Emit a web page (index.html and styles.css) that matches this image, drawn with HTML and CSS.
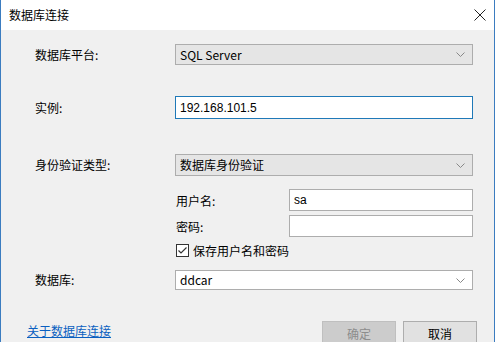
FILE: index.html
```html
<!DOCTYPE html>
<html lang="zh-CN">
<head>
  <meta charset="UTF-8">
  <title>数据库连接</title>
  <link rel="stylesheet" href="styles.css">
</head>
<body>
  <div class="window">
    <div class="titlebar">
      <span class="title">数据库连接</span>
      <svg class="close" width="12" height="12" viewBox="0 0 12 12">
        <path d="M0.5 0.5 L11.5 11.5 M11.5 0.5 L0.5 11.5" stroke="#222" stroke-width="1" fill="none"/>
      </svg>
    </div>
    <div class="content">
      <div class="row row-platform">
        <label class="label">数据库平台:</label>
        <div class="select">
          <span>SQL Server</span>
          <svg class="chev" width="9" height="5" viewBox="0 0 9 5"><path d="M0.5 0.5 L4.5 4.5 L8.5 0.5" stroke="#888" fill="none"/></svg>
        </div>
      </div>
      <div class="row row-instance">
        <label class="label">实例:</label>
        <div class="input focused">192.168.101.5</div>
      </div>
      <div class="row row-auth">
        <label class="label">身份验证类型:</label>
        <div class="select">
          <span>数据库身份验证</span>
          <svg class="chev" width="9" height="5" viewBox="0 0 9 5"><path d="M0.5 0.5 L4.5 4.5 L8.5 0.5" stroke="#888" fill="none"/></svg>
        </div>
      </div>
      <div class="sub">
        <div class="subrow row-user">
          <label class="sublabel">用户名:</label>
          <div class="input small">sa</div>
        </div>
        <div class="subrow row-pass">
          <label class="sublabel">密码:</label>
          <div class="input small"></div>
        </div>
        <div class="check-row">
          <svg class="checkbox" width="13" height="13" viewBox="0 0 13 13">
            <rect x="0.5" y="0.5" width="12" height="12" fill="#fff" stroke="#333"/>
            <path d="M2.5 6.5 L5 9 L10.5 3.5" stroke="#333" stroke-width="1.2" fill="none"/>
          </svg>
          <span>保存用户名和密码</span>
        </div>
      </div>
      <div class="row row-db">
        <label class="label">数据库:</label>
        <div class="select white">
          <span>ddcar</span>
          <svg class="chev" width="9" height="5" viewBox="0 0 9 5"><path d="M0.5 0.5 L4.5 4.5 L8.5 0.5" stroke="#888" fill="none"/></svg>
        </div>
      </div>
      <div class="footer">
        <a class="link" href="#">关于数据库连接</a>
        <div class="buttons">
          <button class="btn disabled">确定</button>
          <button class="btn">取消</button>
        </div>
      </div>
    </div>
  </div>
</body>
</html>
```

FILE: styles.css
```css
html, body {
  margin: 0;
  padding: 0;
  background: #fff;
  overflow: hidden;
}
body {
  font-family: "Noto Sans CJK SC", "Liberation Sans", sans-serif;
  font-size: 12px;
  color: #000;
}
.window {
  width: 493px;
  height: 342px;
  overflow: hidden;
  border-left: 1px solid #3b7cc0;
  border-right: 1px solid #3b7cc0;
  background: #f0f0f0;
}
.titlebar {
  height: 30px;
  background: #fff;
  display: flex;
  align-items: center;
  justify-content: space-between;
  padding: 0 8px 0 8px;
}
.title {
  font-size: 12px;
  line-height: 30px;
}
.content {
  padding: 14px 0 0 0;
}
.row {
  display: flex;
  align-items: center;
}
.label {
  width: 174px;
  padding-left: 34px;
  box-sizing: border-box;
  line-height: 16px;
}
.select, .input {
  box-sizing: border-box;
  width: 298px;
  border: 1px solid #adadad;
  display: flex;
  align-items: center;
  padding-left: 4px;
  line-height: 16px;
}
.select {
  height: 21px;
  background: #e5e5e5;
  justify-content: space-between;
  padding-right: 7px;
}
.select.white {
  background: #fff;
  height: 20px;
}
.input {
  height: 23px;
  background: #fff;
  font-family: "Liberation Sans", sans-serif;
}
.input.focused {
  border-color: #1f79b8;
}
.row-instance {
  margin-top: 31px;
}
.row-auth {
  margin-top: 35px;
}
.row-auth .select {
  height: 22px;
}
.sub {
  margin-left: 174px;
  margin-top: 13px;
}
.subrow {
  display: flex;
  align-items: center;
}
.sublabel {
  width: 114px;
  padding-left: 1px;
  box-sizing: border-box;
}
.input.small {
  width: 184px;
  height: 22px;
}
.row-pass {
  margin-top: 4px;
}
.check-row {
  display: flex;
  align-items: center;
  margin-top: 7px;
  height: 13px;
  padding-left: 1px;
}
.checkbox {
  margin-right: 4px;
}
.row-db {
  margin-top: 13px;
}
.footer {
  display: flex;
  justify-content: space-between;
  align-items: flex-start;
  margin-top: 31px;
}
.link {
  color: #0a5fc0;
  text-decoration: underline;
  margin-left: 26px;
  margin-top: 1px;
}
.buttons {
  display: flex;
  gap: 7px;
  margin-right: 17px;
}
.btn {
  width: 74px;
  height: 24px;
  border: 1px solid #adadad;
  background: #e1e1e1;
  font-family: "Noto Sans CJK SC", sans-serif;
  font-size: 12px;
  color: #000;
  padding: 0;
}
.btn.disabled {
  background: #cccccc;
  border-color: #bfbfbf;
  color: #8d8d8d;
}
```
